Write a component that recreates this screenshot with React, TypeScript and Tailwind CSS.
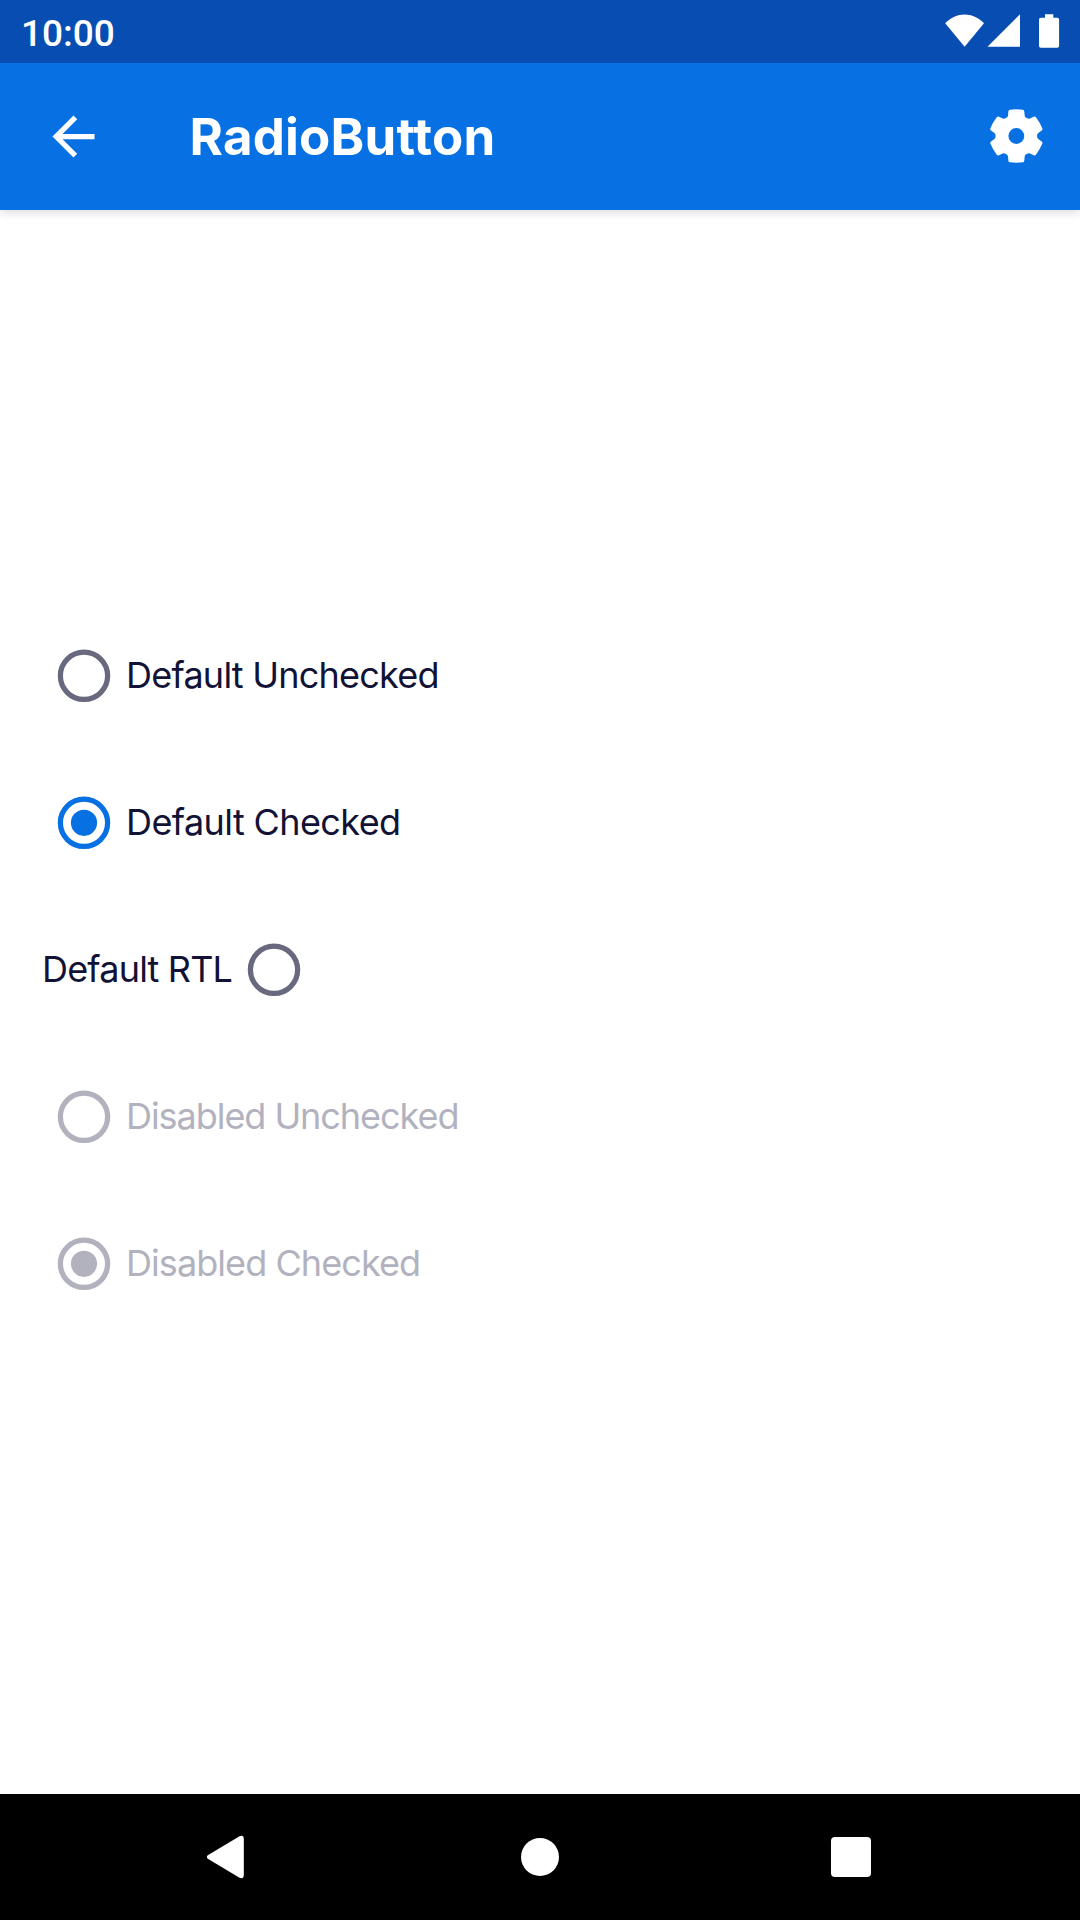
type RadioProps = {
  label: string;
  checked?: boolean;
  disabled?: boolean;
  rtl?: boolean;
  tracking: string;
};

function RadioIcon({ checked }: { checked?: boolean }) {
  return (
    <svg className="h-[63px] w-[63px] shrink-0" viewBox="-0.19 -0.12 24 24" aria-hidden="true">
      <circle cx="12" cy="12" r="9" fill="none" stroke="currentColor" strokeWidth="2" />
      {checked && <circle cx="12" cy="12" r="5" fill="currentColor" />}
    </svg>
  );
}

function RadioRow({ label, checked, disabled, rtl, tracking }: RadioProps) {
  const iconColor = disabled ? "text-[#b2b2bf]" : checked ? "text-[#0770e3]" : "text-[#68697f]";
  const textColor = disabled ? "text-[#b2b2bf]" : "text-[#111236]";
  return (
    <label className={`flex h-[147px] items-center ${rtl ? "flex-row-reverse justify-end gap-[10px] pl-[42px]" : "gap-[11px] pl-[52px]"}`}>
      <span className={iconColor}>
        <RadioIcon checked={checked} />
      </span>
      <span className={`whitespace-nowrap pb-[2px] text-[36px] font-normal leading-[48px] ${tracking} ${textColor}`}>{label}</span>
    </label>
  );
}

const toothAngles = [0, 60, 120, 180, 240, 300];

function GearIcon() {
  return (
    <svg className="h-[54px] w-[54px]" viewBox="-81 -80 160 160" aria-hidden="true">
      <g fill="#fff">
        <circle r="60" />
        {toothAngles.map((a) => (
          <path
            key={a}
            transform={`rotate(${a})`}
            d="M-30.7-53.3C-26.4-55.8-24.9-58-24.7-61L-23.5-73Q-23-77.5-19-78Q0-80.5 19-78Q23-77.5 23.5-73L24.7-61C24.9-58 26.4-55.8 30.7-53.3L0 0Z"
          />
        ))}
      </g>
      <circle r="23.5" fill="#0770e3" />
    </svg>
  );
}

export default function App() {
  return (
    <div className="flex h-[1920px] w-[1080px] flex-col overflow-hidden bg-white font-['Inter',sans-serif]">
      <div className="z-20 flex h-[63px] shrink-0 items-center justify-between bg-[#084eb2] pl-[21px]">
        <span className="pt-[5px] font-['Roboto',sans-serif] text-[37px] font-medium leading-[44px] text-white">10:00</span>
        <svg className="h-[63px] w-[160px]" viewBox="0 0 160 63" fill="#fff" aria-hidden="true">
          <path d="M25.2 23.3C36 11.7 53 11.7 64 23.3L44.6 46.8Z" />
          <path d="M67.5 46.8L100 14.2V46.8Z" />
          <path d="M125 14.2h8.3v3.5h4q1.8 0 1.8 1.8v26.5q0 1.8-1.8 1.8h-16.5q-1.8 0-1.8-1.8v-26.5q0-1.8 1.8-1.8h4.2Z" />
        </svg>
      </div>
      <header className="z-10 flex h-[147px] shrink-0 items-center bg-[#0770e3] pl-[42px] shadow-[0_2px_10px_rgba(0,0,0,0.16)]">
        <svg className="h-[63px] w-[63px]" viewBox="0 0 24 24" fill="#fff" aria-hidden="true">
          <path d="M20 11H7.83l5.59-5.59L12 4l-8 8 8 8 1.41-1.41L7.83 13H20v-2z" />
        </svg>
        <h1 className="ml-[84.5px] pt-px text-[51px] font-bold leading-[60px] tracking-[0.2px] text-white">RadioButton</h1>
        <div className="ml-auto mr-[37px] pb-[2px]">
          <GearIcon />
        </div>
      </header>
      <main className="flex-1 pt-[392px]">
        <RadioRow label="Default Unchecked" tracking="tracking-[-0.77px]" />
        <RadioRow label="Default Checked" checked tracking="tracking-[-0.6px]" />
        <RadioRow label="Default RTL" rtl tracking="tracking-[-0.82px]" />
        <RadioRow label="Disabled Unchecked" disabled tracking="tracking-[-1.05px]" />
        <RadioRow label="Disabled Checked" checked disabled tracking="tracking-[-0.93px]" />
      </main>
      <nav className="flex h-[126px] shrink-0 items-center bg-black">
        <svg className="ml-[205px] h-[44px] w-[40px]" viewBox="0 0 40 44" fill="#fff" aria-hidden="true">
          <path d="M2.8 20.3L34.5 1.3Q38.8-.3 38.8 4V40Q38.8 44.3 34.5 42.7L2.8 23.7Q.9 22 2.8 20.3Z" />
        </svg>
        <div className="ml-[276px] h-[37.5px] w-[37.5px] rounded-full bg-white" />
        <div className="ml-[272.5px] h-[39.5px] w-[39.5px] rounded-[4px] bg-white" />
      </nav>
    </div>
  );
}
